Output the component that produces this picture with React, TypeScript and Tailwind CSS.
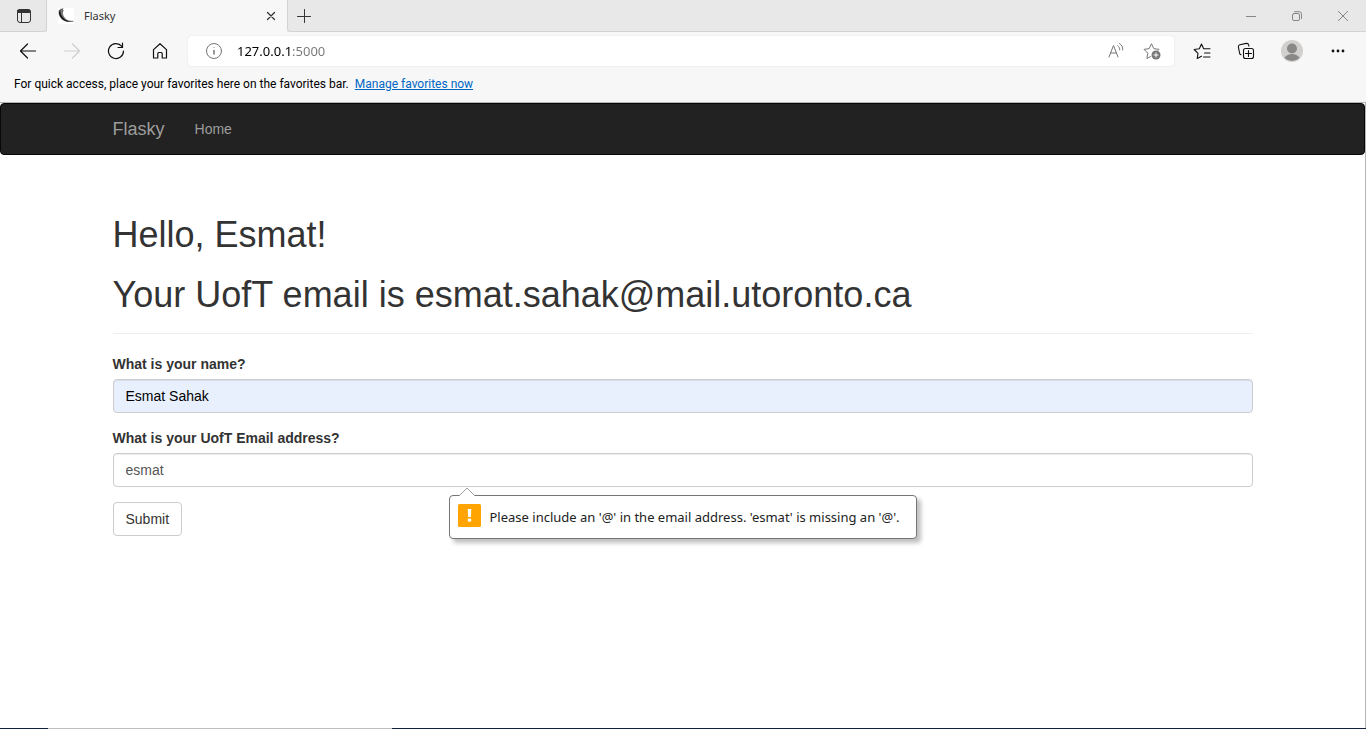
import type { ReactNode } from "react";

type IconProps = { size?: number; className?: string; strokeWidth?: number; children: ReactNode };

function Icon({ size = 16, className = "", strokeWidth = 1, children }: IconProps) {
  return (
    <svg
      width={size}
      height={size}
      viewBox={`0 0 ${size} ${size}`}
      fill="none"
      stroke="currentColor"
      strokeWidth={strokeWidth}
      strokeLinecap="round"
      strokeLinejoin="round"
      aria-hidden="true"
      className={`shrink-0 ${className}`}
    >
      {children}
    </svg>
  );
}

type ToolButtonProps = { label: string; className?: string; disabled?: boolean; children: ReactNode };

function ToolButton({ label, className = "", disabled, children }: ToolButtonProps) {
  return (
    <button
      type="button"
      aria-label={label}
      disabled={disabled}
      className={`flex h-[30px] shrink-0 items-center justify-center ${className}`}
    >
      {children}
    </button>
  );
}

function TabStrip() {
  return (
    <div className="flex h-8 items-stretch bg-[#e8e8e8] text-[#333]">
      <div className="flex w-[47px] items-center justify-center rounded-br border-r border-b border-[#d3d3d3] pl-[2px]">
        <button type="button" aria-label="Tab actions menu">
          <Icon>
            <rect x="1.5" y="1.5" width="13" height="13" rx="2.5" />
            <path d="M2 2h12v2.500H2z" fill="currentColor" />
            <path d="M5.5 5v9" />
          </Icon>
        </button>
      </div>
      <div className="flex w-[240px] items-center bg-[#f7f7f7] pr-2 pl-[11px]">
        <svg width="16" height="16" viewBox="0 0 16 16" aria-hidden="true" className="shrink-0">
          <rect width="16" height="16" fill="#fff" />
          <path d="M.6 2.400 2.400.8 5.600.3 4.600 2.200 4.800 5 3 4z" fill="#999" />
          <path
            d="M.8 2.600C0 5 1 8.400 3.400 11c2.600 2.700 6.800 3.700 12 2.800v-1c-3.600.2-6.400-.6-8.200-2.600C5.600 8.400 4.700 6.200 4.600 3.400L3 2z"
            fill="#777"
          />
          <path
            d="M1 3.200C.8 6 2 8.800 4.400 11.200c2.200 2 5.400 2.600 9 2.200-3.400-.2-6-1.200-7.800-3.200C3.600 8 2.600 5.800 2.400 3.400z"
            fill="#111"
          />
          <path d="M1.200 3 5 1M4.400 4.200l.8-2.200" stroke="#333" strokeWidth=".8" />
        </svg>
        <span className="ml-[10px] flex-1 text-[11px] leading-4">Flasky</span>
        <button type="button" aria-label="Close tab" className="flex size-4 items-center justify-center">
          <Icon size={10} strokeWidth={1.3}>
            <path d="M1.500 1.500l7 7M8.500 1.500l-7 7" />
          </Icon>
        </button>
      </div>
      <div className="flex flex-1 items-center rounded-bl border-b border-l border-[#d3d3d3]">
        <button type="button" aria-label="New tab" className="flex h-8 w-8 items-center justify-center">
          <Icon>
            <path d="M8.500 1.500v13M1.500 8.500h13" />
          </Icon>
        </button>
        <div className="ml-auto flex text-[#868686]">
          <ToolButton label="Minimize" className="w-[46px]">
            <Icon size={10}>
              <path d="M0 5.500h10" strokeLinecap="butt" />
            </Icon>
          </ToolButton>
          <ToolButton label="Restore" className="w-[46px]">
            <Icon size={10}>
              <rect x=".5" y="2.500" width="7" height="7" rx="1.500" />
              <path d="M2.500.7h4.500a2.500 2.500 0 0 1 2.500 2.500v4.300" />
            </Icon>
          </ToolButton>
          <ToolButton label="Close window" className="w-[46px]">
            <Icon size={10}>
              <path d="M.3.3l9.400 9.400M9.700.3.3 9.700" />
            </Icon>
          </ToolButton>
        </div>
      </div>
    </div>
  );
}

function Toolbar() {
  return (
    <div className="flex items-center py-1 pl-[6px] text-[#111]">
      <ToolButton label="Back" className="w-11">
        <Icon size={18} strokeWidth={1.2}>
          <path d="M16.500 9H1.500M8.500 2 1.500 9l7 7" />
        </Icon>
      </ToolButton>
      <ToolButton label="Forward" className="w-11 text-[#cfcfcf]" disabled>
        <Icon size={18} strokeWidth={1.2}>
          <path d="M1.500 9h15M9.500 2l7 7-7 7" />
        </Icon>
      </ToolButton>
      <ToolButton label="Refresh" className="w-11">
        <Icon size={18} strokeWidth={1.2}>
          <path d="M16.500 9A7.500 7.500 0 1 1 14.800 4.300M15.500 1v4.500H11" />
        </Icon>
      </ToolButton>
      <ToolButton label="Home" className="w-11">
        <Icon size={18} strokeWidth={1.2}>
          <path d="M2.500 7.600 9 1.700l6.500 5.900v8.400h-4.300v-4.500a1 1 0 0 0-1-1H7.800a1 1 0 0 0-1 1V16H2.500z" />
        </Icon>
      </ToolButton>
      <div className="ml-[6px] flex h-[30px] flex-1 items-center rounded bg-white pr-1 pl-[17px] text-[#767676] shadow-[0_0_2px_#0000001a]">
        <Icon size={18}>
          <circle cx="9" cy="9" r="7.500" />
          <path d="M9 8v4.500M9 5.500v.6" strokeWidth="1.500" strokeLinecap="butt" />
        </Icon>
        <input
          type="text"
          aria-label="Address bar"
          defaultValue="127.0.0.1:5000"
          className="ml-[14px] min-w-0 flex-1 bg-linear-to-r from-black from-[54px] to-[#767676] to-[54px] bg-clip-text text-[13px] leading-5 text-transparent caret-black outline-none"
        />
        <ToolButton label="Read aloud" className="w-9">
          <Icon size={18}>
            <path d="M2 15 6.500 3.500 11 15M3.500 11h6" />
            <path d="M10.800 3.800c1.400.9 2 2.200 1.900 4M12.500 1.500c2.400 1.500 3.500 3.800 3.200 6.500" />
          </Icon>
        </ToolButton>
        <ToolButton label="Add this page to favorites" className="w-9">
          <Icon size={18}>
            <path d="M7.500 14.600l-3.600 1.900.9-5.300L1 7.400l5.200-.8L8.500 1.700l2.300 4.900 5.200.8-.8.900" />
            <circle cx="13" cy="13" r="4.500" fill="currentColor" stroke="none" />
            <path d="M13 10.500v5M10.500 13h5" stroke="#fff" strokeLinecap="butt" />
          </Icon>
        </ToolButton>
      </div>
      <ToolButton label="Favorites" className="ml-[6px] w-11">
        <Icon size={18} strokeWidth={1.1}>
          <path d="M8.500 14.200l-4.300 2.300.8-5.200L1.200 7.500l5.100-.8L8.500 2l2.200 4.700h6.300M11.500 11H17M10.500 15H17" />
        </Icon>
      </ToolButton>
      <ToolButton label="Collections" className="w-11">
        <Icon size={18} strokeWidth={1.1}>
          <rect x="6.500" y="6.500" width="10" height="10" rx="2" />
          <path d="M11.500 8.500v6M8.500 11.500h6M4 12.700 2.800 12 1.400 5.200a2 2 0 0 1 1.500-2.400l6.400-1.400a2 2 0 0 1 2.300 1.500l.3 1.300" />
        </Icon>
      </ToolButton>
      <ToolButton label="Profile" className="w-12">
        <svg width="22" height="22" viewBox="0 0 22 22" aria-hidden="true">
          <circle cx="11" cy="11" r="11" fill="#d2d0ce" />
          <circle cx="11" cy="8.500" r="5" fill="#8a8886" />
          <path d="M3.500 18c1.500-2.500 4.300-4 7.500-4s6 1.500 7.500 4a11 11 0 0 1-15 0z" fill="#8a8886" />
        </svg>
      </ToolButton>
      <ToolButton label="Settings and more" className="mr-[6px] w-11">
        <svg width="14" height="4" viewBox="0 0 14 4" fill="currentColor" aria-hidden="true">
          <circle cx="2" cy="2" r="1.400" />
          <circle cx="7" cy="2" r="1.400" />
          <circle cx="12" cy="2" r="1.400" />
        </svg>
      </ToolButton>
    </div>
  );
}

function FavoritesBar() {
  return (
    <div className="flex h-8 items-center gap-[6px] pb-1 pl-[14px] font-[Roboto,'Noto_Sans',sans-serif] text-[12px] leading-4 text-black">
      <span>For quick access, place your favorites here on the favorites bar.</span>
      <a href="#favorites" className="text-[#0067c5] underline">
        Manage favorites now
      </a>
    </div>
  );
}

function ValidationBubble() {
  return (
    <div
      role="alert"
      className="absolute top-full left-[336px] mt-2 flex h-11 w-[468px] items-center rounded-[4px] border border-[#767676] bg-white px-2 text-[13px] whitespace-nowrap text-[#222] shadow-[4px_4px_4px_#00000040]"
    >
      <svg width="18" height="10" viewBox="0 0 18 10" aria-hidden="true" className="absolute -top-[9px] left-[8px]">
        <path d="M1 9 9 1l8 8v1H1z" fill="#fff" />
        <path d="M1 9 9 1l8 8" fill="none" stroke="#a0a0a0" />
      </svg>
      <svg width="23" height="23" viewBox="0 0 23 23" aria-hidden="true" className="mb-1 shrink-0">
        <rect width="23" height="23" rx="1.500" fill="#ffa400" />
        <path d="M9.700 5h3.600l-.4 8h-2.800z" fill="#fff" />
        <rect x="9.800" y="14.500" width="3.400" height="3.300" rx="1" fill="#fff" />
      </svg>
      <span className="ml-[9px]">Please include an '@' in the email address. 'esmat' is missing an '@'.</span>
    </div>
  );
}

const field =
  "block h-[34px] w-full rounded-[4px] border border-[#ccc] px-3 text-[14px] leading-5 shadow-[inset_0_1px_1px_#00000013] outline-none";

function Page() {
  return (
    <div className="flex-1 border-t border-r border-[#b5b5b5] bg-white font-['Liberation_Sans',Arial,sans-serif] text-[14px] leading-5 text-[#333]">
      <nav className="rounded-[4px] border border-[#080808] bg-[#222] text-[#9d9d9d]">
        <div className="mx-auto flex h-[50px] max-w-[1170px] items-center px-[15px]">
          <a href="#top" className="mr-[15px] pr-[15px] text-[18px]">
            Flasky
          </a>
          <a href="#home">Home</a>
        </div>
      </nav>
      <main className="mx-auto max-w-[1170px] px-[15px] pt-[60px]">
        <header className="mb-5 border-b border-[#eee] pb-[18px]">
          <h1 className="text-[36px] leading-10">Hello, Esmat!</h1>
          <h1 className="mt-5 text-[36px] leading-10">Your UofT email is esmat.sahak@mail.utoronto.ca</h1>
        </header>
        <form noValidate onSubmit={(event) => event.preventDefault()}>
          <div className="mb-[15px]">
            <label htmlFor="name" className="mb-[5px] block font-bold">
              What is your name?
            </label>
            <input id="name" type="text" defaultValue="Esmat Sahak" className={`${field} bg-[#e8f0fe] text-black`} />
          </div>
          <div className="relative mb-[15px]">
            <label htmlFor="email" className="mb-[5px] block font-bold">
              What is your UofT Email address?
            </label>
            <input id="email" type="email" defaultValue="esmat" className={`${field} bg-white text-[#555]`} />
            <div className="font-['Noto_Sans','Open_Sans',sans-serif]">
              <ValidationBubble />
            </div>
          </div>
          <button type="submit" className="h-[34px] rounded-[4px] border border-[#ccc] bg-white px-3">
            Submit
          </button>
        </form>
      </main>
    </div>
  );
}

export default function App() {
  return (
    <div className="flex min-h-screen flex-col bg-[#f7f7f7] font-['Noto_Sans','Open_Sans',sans-serif]">
      <TabStrip />
      <Toolbar />
      <FavoritesBar />
      <Page />
      <div className="flex h-px bg-[#14213d]">
        <div className="ml-12 w-[344px] bg-[#bfbfbf]" />
      </div>
    </div>
  );
}
